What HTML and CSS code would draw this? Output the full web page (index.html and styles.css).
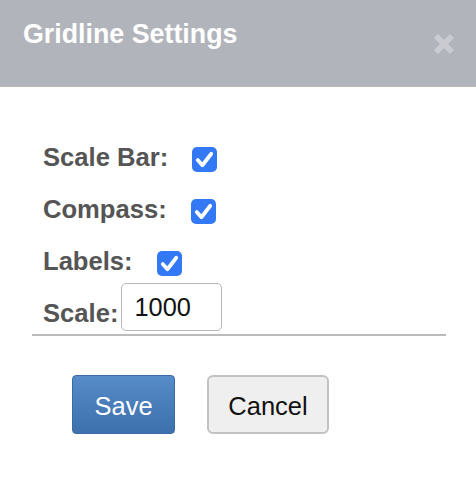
FILE: index.html
```html
<!DOCTYPE html>
<html>
<head>
<meta charset="utf-8">
<link rel="stylesheet" href="styles.css">
</head>
<body>
<div class="dialog">
  <div class="header">
    <h1 class="title">Gridline Settings</h1>
    <button class="close" aria-label="Close">
      <svg width="22" height="22" viewBox="0 0 22 22"><path d="M3 3 L19 19 M19 3 L3 19" stroke="#c9cbd0" stroke-width="5.5" stroke-linecap="butt"/></svg>
    </button>
  </div>
  <div class="content">
    <div class="row"><span class="label">Scale Bar:</span><span class="check"><svg width="25" height="25" viewBox="0 0 24 24"><path d="M5.5 12.5 L10 17.5 L18.5 6.5" fill="none" stroke="#fff" stroke-width="3.6" stroke-linecap="round" stroke-linejoin="round"/></svg></span></div>
    <div class="row"><span class="label">Compass:</span><span class="check"><svg width="25" height="25" viewBox="0 0 24 24"><path d="M5.5 12.5 L10 17.5 L18.5 6.5" fill="none" stroke="#fff" stroke-width="3.6" stroke-linecap="round" stroke-linejoin="round"/></svg></span></div>
    <div class="row"><span class="label">Labels:</span><span class="check"><svg width="25" height="25" viewBox="0 0 24 24"><path d="M5.5 12.5 L10 17.5 L18.5 6.5" fill="none" stroke="#fff" stroke-width="3.6" stroke-linecap="round" stroke-linejoin="round"/></svg></span></div>
    <div class="row scale-row"><span class="label">Scale:</span><input class="scale-input" type="text" value="1000"></div>
  </div>
  <div class="divider"></div>
  <div class="buttons">
    <button class="btn btn-save">Save</button>
    <button class="btn btn-cancel">Cancel</button>
  </div>
</div>
</body>
</html>
```
FILE: styles.css
```css
html, body {
  margin: 0;
  padding: 0;
  background: #fff;
  font-family: "Liberation Sans", Arial, sans-serif;
}
.dialog {
  width: 476px;
}
.header {
  height: 86px;
  background: #b1b4bb;
  border-bottom: 1px solid #b9b9bb;
  display: flex;
  justify-content: space-between;
  align-items: flex-start;
}
.title {
  margin: 19px 0 0 23px;
  font-size: 26.8px;
  line-height: normal;
  font-weight: bold;
  color: #fff;
}
.close {
  margin: 33px 21px 0 0;
  padding: 0;
  border: 0;
  background: none;
  width: 22px;
  height: 22px;
  display: block;
}
.close svg { display: block; }
.content {
  padding: 44px 0 0 43px;
}
.row {
  display: flex;
  align-items: center;
  height: 52px;
}
.label {
  font-size: 25.6px;
  line-height: 30px;
  font-weight: bold;
  color: #555;
}
.check {
  width: 25px;
  height: 25px;
  margin-left: 24px;
  margin-top: 4px;
  background: #3378f5;
  border-radius: 5px;
  display: block;
}
.check svg { display: block; }
.scale-row {
  height: auto;
  align-items: flex-end;
  margin-top: -4px;
}
.scale-row .label {
  margin-bottom: 3px;
}
.scale-input {
  box-sizing: border-box;
  width: 101px;
  height: 48px;
  margin-left: 3px;
  padding: 0 0 0 12px;
  border: 1.5px solid #b8b8b8;
  border-radius: 5px;
  font-family: "Liberation Sans", Arial, sans-serif;
  font-size: 25.4px;
  color: #111;
  background: #fff;
  outline: none;
}
.divider {
  margin: 3px 30px 0 32px;
  height: 0;
  border-top: 2px solid #bbb;
}
.buttons {
  display: flex;
  gap: 32px;
  padding: 39px 0 0 72px;
}
.btn {
  box-sizing: border-box;
  height: 59px;
  font-family: "Liberation Sans", Arial, sans-serif;
  font-size: 25.5px;
  padding: 3px 0 0 0;
}
.btn-save {
  width: 103px;
  color: #fff;
  background: linear-gradient(#568cc9, #3d70ac);
  border: 1.5px solid #3a6aa3;
  border-radius: 4px;
}
.btn-cancel {
  width: 122px;
  color: #111;
  background: #efefef;
  border: 2px solid #c2c2c2;
  border-radius: 6px;
}
```
